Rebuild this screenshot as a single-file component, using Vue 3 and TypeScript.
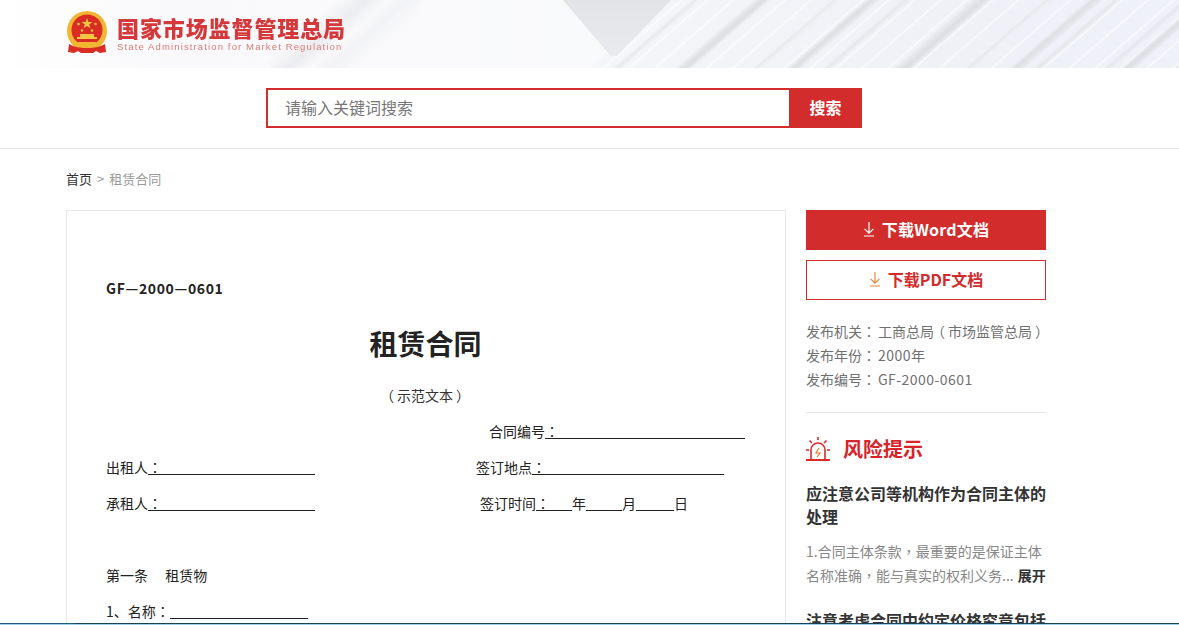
<script setup lang="ts">
const downloadPath: string = 'M6 1v11M1.6 7.8 6 12.2l4.4-4.4M1 15h10'
</script>

<template>
  <div class="page">
    <header class="banner">
      <div class="paper paper-c"></div>
      <div class="paper paper-a"></div>
      <div class="paper paper-b"></div>
      <div class="banner-inner">
        <svg class="emblem" width="42" height="44" viewBox="0 0 42 44">
          <circle cx="21" cy="20" r="20" fill="#f2b632" />
          <circle cx="21" cy="19" r="15.5" fill="#d92c25" />
          <polygon points="21,7 22.4,11 26.4,11 23.2,13.4 24.4,17.2 21,15 17.6,17.2 18.8,13.4 15.6,11 19.6,11" fill="#f6c544" />
          <circle cx="12.5" cy="13" r="1.3" fill="#f6c544" />
          <circle cx="29.5" cy="13" r="1.3" fill="#f6c544" />
          <circle cx="16" cy="19.5" r="1.3" fill="#f6c544" />
          <circle cx="26" cy="19.5" r="1.3" fill="#f6c544" />
          <path d="M11 28h20v-2h-3v-3H14v3h-3z" fill="#f6c544" />
          <path d="M3 33c5 3 11 4 18 4s13-1 18-4l1 8-6 1-4-2-3 2h-12l-3-2-4 2-6-1z" fill="#d92c25" />
          <path d="M10 34c3 2 7 3 11 3s8-1 11-3l-2-3H12z" fill="#f2b632" />
        </svg>
        <div class="org">
          <div class="org-cn">国家市场监督管理总局</div>
          <div class="org-en">State Administration for Market Regulation</div>
        </div>
      </div>
    </header>

    <section class="search-row">
      <div class="search">
        <div class="search-input">请输入关键词搜索</div>
        <div class="search-btn">搜索</div>
      </div>
    </section>

    <main class="container">
      <nav class="crumb">首页<span class="gt">&gt;</span><span class="cur">租赁合同</span></nav>
      <div class="columns">
        <article class="doc">
          <p class="code">GF—2000—0601</p>
          <h1 class="title">租赁合同</h1>
          <p class="center"><span class="p open">（</span>示范文本<span class="p close">）</span></p>
          <p class="line"><span class="contract-no">合同编号<span class="fill p w-no">：</span></span></p>
          <p class="line two">
            <span class="left">出租人<span class="fill p w-party">：</span></span>
            <span class="place">签订地点<span class="fill p w-place">：</span></span>
          </p>
          <p class="line two">
            <span class="left">承租人<span class="fill p w-party">：</span></span>
            <span class="time">签订时间<span class="fill p w-d0">：</span>年<span class="fill empty w-d0"></span>月<span class="fill empty w-d2"></span>日</span>
          </p>
          <p class="line"></p>
          <p class="line">第一条　 租赁物</p>
          <p class="line">1、名称<span class="p">：</span><span class="fill empty w-name"></span></p>
        </article>

        <aside class="side">
          <a class="btn solid">
            <svg class="dl" width="12" height="16" viewBox="0 0 12 16" fill="none" stroke="currentColor" stroke-width="1.2">
              <path :d="downloadPath" />
            </svg>
            <span class="word">下载Word文档</span>
          </a>
          <a class="btn outline">
            <svg class="dl dl-orange" width="12" height="16" viewBox="0 0 12 16" fill="none" stroke="currentColor" stroke-width="1.2">
              <path :d="downloadPath" />
            </svg>
            <span>下载PDF文档</span>
          </a>
          <div class="meta">
            <div>发布机关<span class="p colon">：</span>工商总局<span class="p open">（</span>市场监管总局<span class="p close">）</span></div>
            <div>发布年份<span class="p colon">：</span><span class="num">2000</span>年</div>
            <div>发布编号<span class="p colon">：</span><span class="num">GF-2000-0601</span></div>
          </div>
          <div class="risk-head">
            <svg width="24" height="24" viewBox="0 0 24 24" fill="none" stroke="#dc2a26" stroke-width="1.6">
              <path d="M0 23h24" stroke-width="2" />
              <path d="M5 23V13a7 7 0 0 1 14 0v10" />
              <path d="M13 11l-3 5h4l-3 4" stroke="#e8772e" stroke-width="1.2" />
              <path d="M12 0v3M3.5 3.5l2.4 2.4M20.5 3.5l-2.4 2.4M0 13h3M21 13h3" />
            </svg>
            <span>风险提示</span>
          </div>
          <h3 class="risk-title">应注意公司等机构作为合同主体的处理</h3>
          <div class="risk-desc">
            <div>1.合同主体条款<span class="p">，</span>最重要的是保证主体</div>
            <div>名称准确<span class="p">，</span>能与真实的权利义务...<b>展开</b></div>
          </div>
          <h3 class="risk-title next">注意考虑合同中约定价格究竟包括</h3>
        </aside>
      </div>
    </main>
    <div class="edge"></div>
  </div>
</template>

<style>
html, body { margin: 0; overflow: hidden; background: #fff; }
</style>

<style scoped>
.page {
  position: relative;
  height: 625px;
  overflow: hidden;
  font-family: "Noto Sans CJK SC", "Liberation Sans", sans-serif;
  font-size: 14px;
  color: #222;
}
.p { font-family: "Noto Sans CJK TC", "Noto Sans CJK SC", sans-serif; }
.open { display: inline-block; transform: translateX(-3px); }
.close { display: inline-block; transform: translateX(3px); }
.colon { margin-right: 2px; }
.banner {
  position: relative;
  height: 68px;
  overflow: hidden;
  background: linear-gradient(90deg, #fff 0, #f9f9fb 14%, #f9fafc 100%);
}
.banner-inner {
  position: relative;
  z-index: 2;
  display: flex;
  align-items: center;
  gap: 9px;
  height: 100%;
  padding-left: 66px;
  filter: blur(.35px);
}
.emblem { margin-top: -2px; flex: none; }
.org { margin-top: -3px; }
.org-cn {
  font-size: 22px;
  line-height: 28px;
  font-weight: 900;
  letter-spacing: .9px;
  color: #d4383a;
  white-space: nowrap;
}
.org-en {
  font-family: "Liberation Sans", sans-serif;
  font-size: 9.5px;
  line-height: 12px;
  letter-spacing: 1.13px;
  color: #dd7c78;
  white-space: nowrap;
}
.paper { position: absolute; top: 0; height: 68px; }
.paper-a {
  z-index: 2;
  left: 563px;
  width: 108px;
  background: linear-gradient(180deg, #e2e3e6, #ebecef);
  clip-path: polygon(0 0, 100% 0, 50% 82%, 44% 82%);
}
.paper-b {
  z-index: 1;
  left: 590px;
  right: 0;
  background:
    repeating-linear-gradient(139deg, transparent 0 34px, rgba(205, 206, 210, .5) 38px, rgba(205, 206, 210, .5) 40px, transparent 45px 73px),
    repeating-linear-gradient(139deg, transparent 0 20px, rgba(222, 223, 227, .55) 23px, transparent 27px 46px),
    repeating-linear-gradient(139deg, transparent 0 7px, rgba(255, 255, 255, .55) 9px, transparent 11px 17px),
    linear-gradient(90deg, #f5f6f9, #eff1f7 60%, #eef1f8);
  clip-path: polygon(80px 0, 100% 0, 100% 100%, 0 100%);
}
.paper-c {
  z-index: 1;
  left: 270px;
  width: 150px;
  background: linear-gradient(139deg, transparent 30%, rgba(225, 226, 230, .55) 42%, transparent 52%, rgba(232, 233, 237, .4) 60%, transparent 72%);
}
.search-row {
  height: 80px;
  border-bottom: 1px solid #e4e4e4;
  padding-left: 266px;
}
.search {
  display: flex;
  width: 596px;
  height: 40px;
  padding-top: 20px;
}
.search-input {
  flex: 1;
  box-sizing: border-box;
  border: 2px solid #d32c2c;
  border-right: 0;
  padding-left: 17px;
  font-size: 16px;
  line-height: 34px;
  color: #777;
}
.search-btn {
  width: 73px;
  background: #d32c2c;
  color: #fff;
  font-size: 16px;
  font-weight: 700;
  line-height: 38px;
  text-align: center;
}
.container { width: 980px; margin-left: 66px; }
.crumb {
  height: 61px;
  line-height: 60px;
  font-size: 13px;
  color: #333;
}
.gt { margin: 0 5px; }
.gt, .cur { color: #999; }
.columns { display: flex; gap: 20px; align-items: flex-start; }
.doc {
  box-sizing: border-box;
  width: 720px;
  height: 500px;
  border: 1px solid #e8e8e8;
  padding: 59px 39px 0;
  font-size: 14px;
}
.doc p { margin: 0; line-height: 36px; height: 36px; white-space: pre; }
.doc .code { font-weight: 700; color: #222; letter-spacing: .65px; }
.title {
  margin: 4px 0 0 -1px;
  height: 67px;
  line-height: 66px;
  text-align: center;
  font-size: 28px;
  font-weight: 700;
  color: #222;
}
.doc .center { text-align: center; margin-left: -2px; color: #333; }
.contract-no { margin-left: 383px; }
.place { margin-left: 161px; }
.time { margin-left: 165px; }
.two { display: flex; }
.fill {
  display: inline-block;
  line-height: 13px;
  border-bottom: 1px solid #222;
  vertical-align: baseline;
}
.empty { vertical-align: -2px; }
.w-no { width: 200px; }
.w-party { width: 167px; }
.w-place { width: 192px; }
.w-d0 { width: 36px; height: 13px; }
.w-d2 { width: 38px; height: 13px; }
.w-name { width: 138px; height: 13px; }
.side { width: 240px; flex: none; }
.btn {
  box-sizing: border-box;
  display: flex;
  align-items: center;
  justify-content: center;
  gap: 7px;
  height: 40px;
  padding-bottom: 2px;
  font-size: 16px;
  font-weight: 700;
}
.word { letter-spacing: .2px; }
.solid { background: #d32c2c; color: #fff; }
.outline { margin-top: 10px; border: 1px solid #d32c2c; color: #d32c2c; }
.dl { flex: none; }
.dl-orange { color: #e5883c; }
.meta {
  margin-top: 19px;
  padding-bottom: 21px;
  border-bottom: 1px solid #e4e4e4;
  line-height: 24px;
  color: #707070;
}
.num { letter-spacing: .45px; }
.risk-head {
  display: flex;
  align-items: center;
  gap: 13px;
  margin-top: 24px;
  font-size: 20px;
  font-weight: 700;
  line-height: 24px;
  color: #d8232a;
}
.risk-title {
  margin: 21px 0 0;
  font-size: 16px;
  line-height: 23px;
  font-weight: 700;
  color: #333;
}
.risk-desc {
  margin: 11px 0 0;
  line-height: 24px;
  color: #888;
  white-space: nowrap;
}
.risk-desc b { margin-left: 4px; color: #333; }
.risk-title.next { margin-top: 22px; white-space: nowrap; }
.edge {
  position: absolute;
  left: 0;
  right: 0;
  bottom: 0;
  height: 2px;
  background: linear-gradient(90deg, #1f5b75 0 75px, #1a4254 75px);
  border-bottom: 1px solid #9fd0ea;
  box-sizing: border-box;
}
</style>
